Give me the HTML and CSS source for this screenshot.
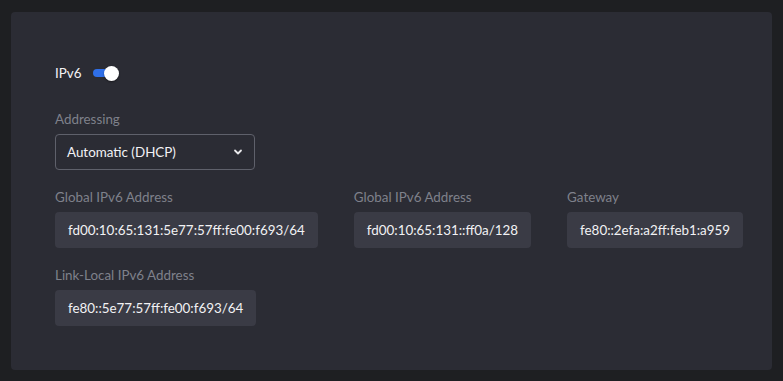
FILE: index.html
```html
<!DOCTYPE html>
<html>
    <head>
        <title>IPv6</title>
        <link rel="stylesheet" href="styles.css">
    </head>
    <body>
        <div class="panel">
          <div class="toggle-row">
            <span class="toggle-label">IPv6</span>
            <span class="toggle"><span class="knob"></span></span>
          </div>

          <div class="field">
            <label>Addressing</label>
            <div class="select">
                <span>Automatic (DHCP)</span>
                <svg width="12" height="12" viewBox="0 0 12 12" fill="none" stroke="#e8e8ea" stroke-width="1.8" stroke-linecap="round" stroke-linejoin="round">
                    <path d="M3 4.5l3 3 3-3"/>
                </svg>
            </div>
          </div>

          <div class="row">
            <div class="field">
              <label>Global IPv6 Address</label>
              <div class="value">fd00:10:65:131:5e77:57ff:fe00:f693/64</div>
            </div>
            <div class="field">
              <label>Global IPv6 Address</label>
              <div class="value">fd00:10:65:131::ff0a/128</div>
            </div>
            <div class="field">
              <label>Gateway</label>
              <div class="value">fe80::2efa:a2ff:feb1:a959</div>
            </div>
          </div>

          <div class="field">
            <label>Link-Local IPv6 Address</label>
            <div class="value">fe80::5e77:57ff:fe00:f693/64</div>
          </div>
        </div>
    </body>
</html>
```

FILE: styles.css
```css
* {
    margin: 0;
    padding: 0;
    box-sizing: border-box;
}

body {
    background-color: #1e1f22;
    font-family: Lato, "Noto Sans", sans-serif;
    font-size: 13.4px;
    color: #f2f2f4;
    padding: 12px 11px 11px 11px;
    height: 100vh;
}

.panel {
    background: #2b2c34;
    border-radius: 4px;
    height: 358px;
    width: 761px;
    padding: 53px 44px 0 44px;
    display: flex;
    flex-direction: column;
    align-items: flex-start;
}

.toggle-row {
    display: flex;
    align-items: center;
    gap: 12px;
    height: 16px;
    margin-bottom: 30px;
}

.toggle {
    position: relative;
    display: block;
    width: 20px;
    height: 8px;
    border-radius: 4px;
    background: #2f6fe8;
}

.knob {
    position: absolute;
    right: -6px;
    top: -3.5px;
    width: 15px;
    height: 15px;
    border-radius: 50%;
    background: #ffffff;
    box-shadow: 0 1px 2px rgba(0, 0, 0, 0.4);
}

.field {
    display: flex;
    flex-direction: column;
    align-items: flex-start;
    margin-bottom: 19px;
}

.field label {
    color: #7f818b;
    height: 17px;
    line-height: 17px;
    margin-bottom: 6px;
}

.select {
    width: 200px;
    height: 36px;
    border: 1px solid #5f616b;
    border-radius: 4px;
    display: flex;
    align-items: center;
    justify-content: space-between;
    padding: 0 10px 0 11px;
}

.row {
    display: flex;
    gap: 36px;
}

.value {
    background: #3a3b45;
    border-radius: 4px;
    height: 36px;
    line-height: 36px;
    padding: 0 13px;
}
```
